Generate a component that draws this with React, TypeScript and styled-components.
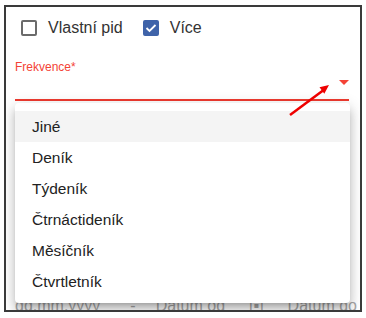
import styled, { createGlobalStyle } from 'styled-components';

const GlobalStyle = createGlobalStyle`
  body {
    margin: 0;
    background: #ffffff;
    font-family: "Liberation Sans", Arial, sans-serif;
  }
`;

const Frame = styled.div`
  position: relative;
  box-sizing: border-box;
  width: 358px;
  height: 307px;
  margin: 5px 0 0 4px;
  padding: 0 11px 0 9px;
  border: 2px solid #3a3a3a;
  overflow: hidden;
  background: #ffffff;
`;

const CheckRow = styled.div`
  display: flex;
  align-items: center;
  height: 16px;
  margin-top: 13px;
  padding-left: 6px;
`;

const CheckItem = styled.label`
  display: flex;
  align-items: center;
  gap: 11px;
  margin-right: 20px;
  font-size: 16px;
  line-height: 16px;
  color: #333333;
`;

const Box = styled.span<{ checked?: boolean }>`
  box-sizing: border-box;
  display: flex;
  align-items: center;
  justify-content: center;
  width: 16px;
  height: 16px;
  border-radius: 2px;
  border: 2px solid ${p => (p.checked ? '#3f63a9' : '#6b6b6b')};
  background: ${p => (p.checked ? '#3f63a9' : '#ffffff')};
`;

const Field = styled.div`
  margin-top: 24px;
`;

const FieldLabel = styled.div`
  font-size: 12px;
  line-height: 14px;
  color: #f44336;
`;

const SelectInput = styled.div`
  position: relative;
  height: 25px;
  border-bottom: 2px solid #ee3a2f;
`;

const Caret = styled.span`
  position: absolute;
  right: 0;
  top: 6px;
  width: 0;
  height: 0;
  border-left: 5px solid transparent;
  border-right: 5px solid transparent;
  border-top: 5px solid #f44336;
`;

const HiddenField = styled.div`
  height: 108px;
  border-bottom: 1px solid #e2e2e2;
`;

const DateRow = styled.div`
  display: flex;
  align-items: center;
  margin-top: 87px;
  font-size: 16px;
  line-height: 18px;
  color: #a8a8a8;
  white-space: nowrap;
`;

const DatePart = styled.span<{ offset: number }>`
  margin-left: ${p => p.offset}px;
`;

const Menu = styled.ul`
  position: absolute;
  left: 9px;
  top: 96px;
  width: 335px;
  height: 200px;
  box-sizing: border-box;
  margin: 0;
  padding: 8px 0 6px;
  list-style: none;
  background: #ffffff;
  border-radius: 4px;
  box-shadow: 0 5px 5px -3px rgba(0, 0, 0, 0.2), 0 8px 10px 1px rgba(0, 0, 0, 0.14),
    0 3px 14px 2px rgba(0, 0, 0, 0.12);
`;

const MenuItem = styled.li<{ active?: boolean }>`
  height: 31px;
  display: flex;
  align-items: center;
  padding-left: 17px;
  font-size: 15.5px;
  color: #222222;
  background: ${p => (p.active ? '#f4f4f4' : 'transparent')};
`;

const Pointer = styled.svg`
  position: absolute;
  left: 278px;
  top: 74px;
`;

const options = ['Jiné', 'Deník', 'Týdeník', 'Čtrnáctideník', 'Měsíčník', 'Čtvrtletník'];

const App = () => {
  return (
    <>
      <GlobalStyle />
      <Frame>
        <CheckRow>
          <CheckItem>
            <Box />
            Vlastní pid
          </CheckItem>
          <CheckItem>
            <Box checked>
              <svg width="12" height="12" viewBox="0 0 12 12">
                <polyline points="1.5,6 4.5,9 10.5,3" fill="none" stroke="#fff" strokeWidth="1.8" />
              </svg>
            </Box>
            Více
          </CheckItem>
        </CheckRow>

        <Field>
          <FieldLabel>Frekvence*</FieldLabel>
          <SelectInput>
            <Caret />
          </SelectInput>
        </Field>

        <HiddenField />
        <DateRow>
          <DatePart offset={0}>dd.mm.yyyy</DatePart>
          <DatePart offset={30}>-</DatePart>
          <DatePart offset={20}>Datum od</DatePart>
          <DatePart offset={24}>[▪]</DatePart>
          <DatePart offset={24}>Datum do</DatePart>
        </DateRow>

        <Menu>
          {options.map((o, i) => (
            <MenuItem key={o} active={i === 0}>
              {o}
            </MenuItem>
          ))}
        </Menu>

        <Pointer width="50" height="40" viewBox="0 0 50 40">
          <line x1="6" y1="34" x2="39" y2="9.5" stroke="#ee0000" strokeWidth="2.5" />
          <polygon points="45,4 40.3,12.7 35.5,6.3" fill="#ee0000" />
        </Pointer>
      </Frame>
    </>
  );
};

export default App;
